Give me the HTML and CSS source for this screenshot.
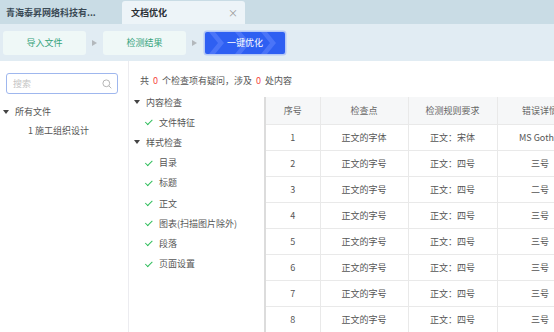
FILE: index.html
```html
<!DOCTYPE html>
<html lang="zh-CN">
<head>
<meta charset="utf-8">
<title>文档优化</title>
<link rel="stylesheet" href="styles.css">
</head>
<body>
<div class="app">
  <div class="tabs">
    <div class="tab">青海泰昇网络科技有...</div>
    <div class="tab active"><span>文档优化</span><span class="close">×</span></div>
  </div>
  <div class="steps">
    <div class="step">导入文件</div>
    <span class="arrow"></span>
    <div class="step">检测结果</div>
    <span class="arrow"></span>
    <div class="step current">
      <svg class="chev" viewBox="0 0 80 22" preserveAspectRatio="none"><path d="M4 0 L13 11 L4 22 L10 22 L19 11 L10 0Z M30 0 L39 11 L30 22 L36 22 L45 11 L36 0Z M56 0 L65 11 L56 22 L62 22 L71 11 L62 0Z" fill="#4a74f8"/></svg>
      <span class="label">一键优化</span>
    </div>
  </div>
  <div class="main">
    <aside class="left">
      <div class="search">
        <span class="ph">搜索</span>
        <svg width="10" height="10" viewBox="0 0 10 10"><circle cx="4.3" cy="4.3" r="3.4" fill="none" stroke="#b5b5b5" stroke-width="1"/><path d="M6.8 6.8 L9.3 9.3" stroke="#b5b5b5" stroke-width="1"/></svg>
      </div>
      <ul class="ftree">
        <li class="node"><span class="tri"></span>所有文件</li>
        <li class="leaf">1 施工组织设计</li>
      </ul>
    </aside>
    <section class="mid">
      <div class="summary">共 <b>0</b> 个检查项有疑问，涉及 <b>0</b> 处内容</div>
      <div class="content">
        <ul class="ctree">
          <li class="node"><span class="tri"></span>内容检查</li>
          <li class="item"><span class="ok"></span>文件特征</li>
          <li class="node"><span class="tri"></span>样式检查</li>
          <li class="item"><span class="ok"></span>目录</li>
          <li class="item"><span class="ok"></span>标题</li>
          <li class="item"><span class="ok"></span>正文</li>
          <li class="item"><span class="ok"></span>图表(扫描图片除外)</li>
          <li class="item"><span class="ok"></span>段落</li>
          <li class="item"><span class="ok"></span>页面设置</li>
        </ul>
        <div class="tablewrap">
          <table>
            <colgroup><col class="c1"><col class="c2"><col class="c3"><col class="c4"></colgroup>
            <thead><tr><th>序号</th><th>检查点</th><th>检测规则要求</th><th>错误详情</th></tr></thead>
            <tbody>
              <tr><td>1</td><td>正文的字体</td><td>正文：宋体</td><td>MS Gothic</td></tr>
              <tr><td>2</td><td>正文的字号</td><td>正文：四号</td><td>三号</td></tr>
              <tr><td>3</td><td>正文的字号</td><td>正文：四号</td><td>二号</td></tr>
              <tr><td>4</td><td>正文的字号</td><td>正文：四号</td><td>三号</td></tr>
              <tr><td>5</td><td>正文的字号</td><td>正文：四号</td><td>三号</td></tr>
              <tr><td>6</td><td>正文的字号</td><td>正文：四号</td><td>三号</td></tr>
              <tr><td>7</td><td>正文的字号</td><td>正文：四号</td><td>三号</td></tr>
              <tr><td>8</td><td>正文的字号</td><td>正文：四号</td><td>三号</td></tr>
            </tbody>
          </table>
        </div>
      </div>
    </section>
  </div>
</div>
</body>
</html>
```
FILE: styles.css
```css
* { box-sizing: border-box; }
html, body { margin: 0; padding: 0; }
body {
  width: 554px; height: 332px; overflow: hidden; background: #fff;
  font-family: "Microsoft YaHei", "Noto Sans CJK SC", "Noto Sans", sans-serif;
  font-size: 9px; color: #555;
}
.app { width: 554px; height: 332px; display: flex; flex-direction: column; }

.tabs { height: 24px; background: #c9dce5; display: flex; align-items: flex-end; padding-left: 0; }
.tab { height: 23px; line-height: 23px; padding: 0 6px; width: 122px; color: #3a4a55; font-weight: 600; font-size: 9px; }
.tab.active {
  width: 123px; background: #edf4f8; border-radius: 3px 3px 0 0; display: flex; justify-content: space-between;
  padding: 0 7px 0 9px; color: #2a2f35; font-weight: 700;
}
.tab .close { color: #999; font-weight: 400; font-size: 10px; }

.steps { height: 37px; background: #e1ecf3; display: flex; align-items: center; padding: 0 0 0 3px; }
.step {
  width: 83px; height: 24px; border-radius: 3px; background: #eff8f7; color: #35a37b;
  display: flex; align-items: center; justify-content: center; font-size: 9px;
}
.arrow { width: 0; height: 0; border-left: 5px solid #b3b8bc; border-top: 3.5px solid transparent; border-bottom: 3.5px solid transparent; margin: 0 6px; }
.step.current {
  position: relative; width: 80px; height: 22px; background: #2e5ff2; color: #fff; border-radius: 2px;
  box-shadow: 0 0 0 1.5px #b6c9f6; margin-left: 2px; overflow: hidden;
}
.chev { position: absolute; left: 0; top: 0; width: 100%; height: 100%; }
.step.current .label { position: relative; }

.main { flex: 1; display: flex; min-height: 0; }
.left { width: 129px; border-right: 1px solid #ececf0; padding: 12px 0 0 6px; flex: none; }
.search {
  width: 112px; height: 21px; border: 1px solid #9fb7ee; border-radius: 3px;
  display: flex; align-items: center; justify-content: space-between; padding: 0 5px 0 6px;
}
.search .ph { color: #c4c4c4; }
ul { list-style: none; margin: 0; padding: 0; }
.ftree { margin-top: 8px; margin-left: -3px; }
.ftree li { height: 19px; line-height: 19px; display: flex; align-items: center; color: #555; }
.tri { width: 0; height: 0; border-top: 4px solid #444; border-left: 3px solid transparent; border-right: 3px solid transparent; margin-right: 6px; }
.ftree .leaf { padding-left: 25px; }

.mid { flex: 1; display: flex; flex-direction: column; min-width: 0; }
.summary { padding: 11px 0 0 11px; height: 28px; line-height: 18px; color: #555; }
.summary b { color: #f5473d; font-weight: 400; padding: 0 2px; }
.content { flex: 1; display: flex; min-height: 0; }
.ctree { width: 135px; flex: none; padding: 5px 0 0 5px; margin-top: -2px; }
.ctree li { height: 20.2px; display: flex; align-items: center; color: #555; }
.ctree .item { padding-left: 12px; }
.ok { width: 7px; height: 4px; border-left: 1.5px solid #2fbe5c; border-bottom: 1.5px solid #2fbe5c; transform: rotate(-45deg) translateY(-1px); margin-right: 6px; }

.tablewrap { flex: 1; overflow: hidden; border-left: 2px solid #dcdcdc; margin-top: 8px; }
table { border-collapse: collapse; table-layout: fixed; width: 317px; }
th, td { border: 1px solid #e9e9e9; text-align: center; white-space: nowrap; overflow: hidden; font-weight: 400; color: #555; }
th { height: 27px; background: #f6f7f8; color: #666; border-top: none; }
td { height: 26px; }
th:first-child, td:first-child { border-left: none; }
.c1 { width: 54px; } .c2 { width: 88px; } .c3 { width: 89px; } .c4 { width: 86px; }
```
